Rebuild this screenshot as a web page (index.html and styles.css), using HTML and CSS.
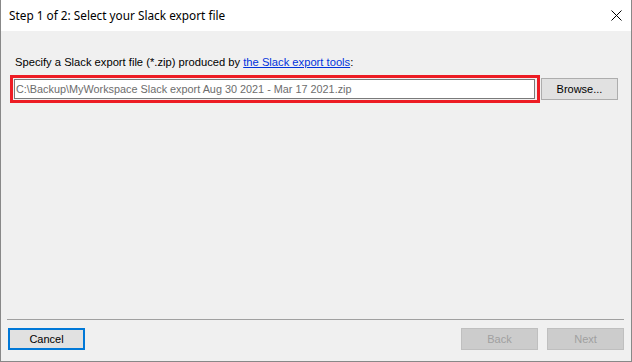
FILE: index.html
```html
<!DOCTYPE html>
<html lang="en">
<head>
  <meta charset="UTF-8">
  <title>Step 1 of 2: Select your Slack export file</title>
  <link rel="stylesheet" href="styles.css">
</head>
<body>
  <div class="window">
    <!-- Title bar -->
    <div class="titlebar">
      <span class="title">Step 1 of 2: Select your Slack export file</span>
      <svg class="close" width="11" height="11" viewBox="0 0 11 11">
        <path d="M0.5 0.5 L10.5 10.5 M10.5 0.5 L0.5 10.5" stroke="#000" stroke-width="1" fill="none"/>
      </svg>
    </div>

    <!-- Step body -->
    <div class="content">
      <div class="prompt">Specify a Slack export file (*.zip) produced by <a href="#">the Slack export tools</a>:</div>
      <div class="file-row">
        <div class="highlight">
          <input class="file-path" type="text" readonly value="C:\Backup\MyWorkspace Slack export Aug 30 2021 - Mar 17 2021.zip">
        </div>
        <button class="btn">Browse...</button>
      </div>
    </div>

    <!-- Footer buttons -->
    <div class="footer">
      <div class="separator"></div>
      <div class="buttons">
        <button class="btn btn-focus">Cancel</button>
        <div class="nav">
          <button class="btn" disabled>Back</button>
          <button class="btn" disabled>Next</button>
        </div>
      </div>
    </div>
  </div>
</body>
</html>
```

FILE: styles.css
```css
body {
  margin: 0;
  font-family: 'Liberation Sans', Arial, sans-serif;
  font-size: 11px;
  color: #000;
}
.window {
  width: 632px;
  height: 362px;
  box-sizing: border-box;
  border: 1px solid #888;
  border-top: none;
  background: #f0f0f0;
  display: flex;
  flex-direction: column;
}
/* Title bar */
.titlebar {
  height: 31px;
  background: #fff;
  display: flex;
  align-items: center;
  justify-content: space-between;
  padding: 0 9px 0 8px;
  box-sizing: border-box;
}
.title {
  font-family: 'Noto Sans', sans-serif;
  font-size: 11.8px;
  padding-bottom: 1px;
}
.close {
  display: block;
  margin-bottom: 1px;
}
/* Step body */
.content {
  flex: 1;
  padding: 25px 0 0 9px;
}
.prompt {
  font-size: 11.2px;
  line-height: 13px;
  margin-left: 5px;
  margin-bottom: 6px;
}
.prompt a {
  color: #0033dd;
}
.file-row {
  display: flex;
  align-items: center;
  gap: 1px;
}
.highlight {
  width: 530px;
  height: 28px;
  box-sizing: border-box;
  border: 3px solid #ed1c24;
  padding: 1px 2px 1px 1px;
  display: flex;
}
.file-path {
  flex: 1;
  height: 20px;
  box-sizing: border-box;
  border: 1px solid #7a7a7a;
  background: #fff;
  font-family: 'Liberation Sans', Arial, sans-serif;
  font-size: 10.85px;
  color: #6d6d6d;
  padding: 0 1px;
  outline: none;
}
.btn {
  width: 77px;
  height: 22px;
  box-sizing: border-box;
  border: 1px solid #adadad;
  background: #e1e1e1;
  font-family: 'Liberation Sans', Arial, sans-serif;
  font-size: 11px;
  color: #000;
  padding: 0;
}
.btn:disabled {
  background: #cccccc;
  border-color: #bfbfbf;
  color: #a0a0a0;
}
.btn-focus {
  border: 2px solid #0078d7;
}
/* Footer */
.footer {
  padding: 0 7px 11px 7px;
}
.separator {
  height: 1px;
  background: #a0a0a0;
  margin: 0 0 8px -1px;
}
.buttons {
  display: flex;
  justify-content: space-between;
}
.nav {
  display: flex;
  gap: 9px;
}
```
